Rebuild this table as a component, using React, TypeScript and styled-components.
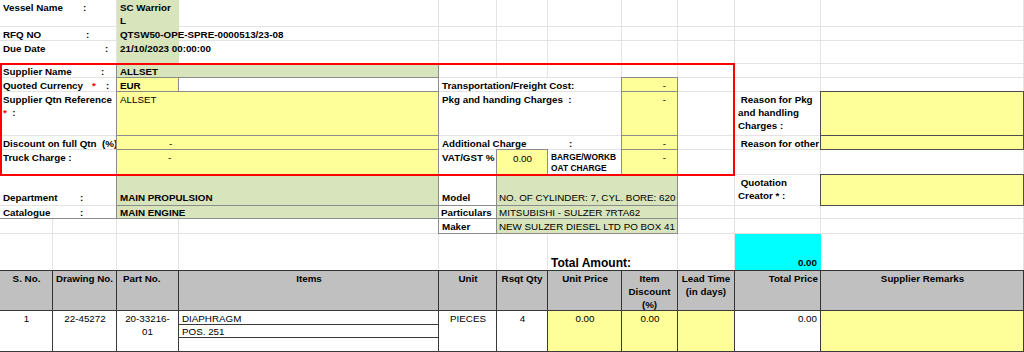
import React from "react";
import styled, { createGlobalStyle, css } from "styled-components";

const Global = createGlobalStyle`
  html, body { margin: 0; padding: 0; background: #ffffff; overflow: hidden; }
  body { font-family: "Liberation Sans", Arial, sans-serif; }
`;

const COLS = [53, 64, 62, 260, 58, 51, 74, 56, 57, 86, 203];
const ROWS = [27, 14, 23, 14, 14, 44, 14, 25, 31, 13, 15, 37, 40, 14, 13, 14];
const GRID = "#e3e3e3";

type Tone = "none" | "white" | "green" | "yellow" | "cyan";
type Frame = "gray" | "dark" | "under";

const toneBg: Record<Tone, string> = {
  none: "transparent",
  white: "#ffffff",
  green: "#d8e4bc",
  yellow: "#ffff99",
  cyan: "#00ffff",
};

const frameColor: Record<Frame, string> = {
  gray: "#8c8c8c",
  dark: "#4d4d4d",
  under: "#8c8c8c",
};

interface CellProps {
  $r: number;
  $c: number;
  $rs?: number;
  $cs?: number;
  $v?: "top" | "bottom";
  $align?: "left" | "center" | "right";
  $pl?: number;
  $pr?: number;
  $pt?: number;
  $wrap?: boolean;
  $clip?: boolean;
  $spill?: boolean;
  $tone?: Tone;
  $frame?: Frame;
  $bold?: boolean;
}

const Sheet = styled.div`
  display: grid;
  grid-template-columns: ${COLS.map((w) => `${w}px`).join(" ")};
  grid-template-rows: ${ROWS.map((h) => `${h}px`).join(" ")};
  width: 1024px;
  height: 352px;
  overflow: hidden;
  font-family: "Liberation Sans", Arial, sans-serif;
  font-size: 9.8px;
  line-height: 13px;
  color: #000000;
`;

const Cell = styled.div<CellProps>`
  grid-row: ${(p) => p.$r} / span ${(p) => p.$rs ?? 1};
  grid-column: ${(p) => p.$c} / span ${(p) => p.$cs ?? 1};
  box-sizing: border-box;
  min-width: 0;
  min-height: 0;
  display: flex;
  flex-direction: column;
  justify-content: ${(p) => (p.$v === "bottom" ? "flex-end" : "flex-start")};
  text-align: ${(p) => p.$align ?? "left"};
  white-space: ${(p) => (p.$wrap ? "pre-wrap" : "pre")};
  overflow: ${(p) => (p.$clip ? "hidden" : "visible")};
  padding: ${(p) => p.$pt ?? 1}px ${(p) => p.$pr ?? 2}px
    ${(p) => (p.$v === "bottom" ? 1 : 0)}px ${(p) => p.$pl ?? 3}px;
  background: ${(p) => toneBg[p.$tone ?? "none"]};
  border-right: 1px solid
    ${(p) => (p.$tone && p.$tone !== "none" ? "transparent" : GRID)};
  border-bottom: 1px solid
    ${(p) => (p.$tone && p.$tone !== "none" ? "transparent" : GRID)};
  ${(p) =>
    p.$frame &&
    p.$frame !== "under" &&
    css`
      border: 1px solid ${frameColor[p.$frame]};
      margin: -1px 0 0 -1px;
      position: relative;
      z-index: 1;
    `}
  ${(p) =>
    p.$frame === "under" &&
    css`
      border-bottom-color: ${frameColor.under};
    `}
  ${(p) =>
    p.$spill &&
    css`
      position: relative;
      z-index: 2;
    `}
`;

const Blank = styled(Cell)``;

const Label = styled(Cell)`
  font-weight: 700;
`;

const Value = styled(Cell)`
  font-weight: ${(p) => (p.$bold ? 700 : 400)};
`;

const TotalLabel = styled(Label)`
  font-size: 12px;
  line-height: 14px;
  padding-bottom: 0;
`;

const TinyLabel = styled(Label)`
  font-size: 8.4px;
  line-height: 11px;
  white-space: normal;
  word-break: break-all;
`;

const HeadCell = styled(Cell)`
  background: #c0c0c0;
  font-weight: 700;
  text-align: ${(p) => p.$align ?? "center"};
  white-space: normal;
  border: 1px solid #333333;
  margin: -1px 0 0 -1px;
  position: relative;
  z-index: 1;
`;

const BodyCell = styled(Cell)`
  font-weight: 400;
  text-align: ${(p) => p.$align ?? "center"};
  white-space: normal;
  border: 1px solid #3a3a3a;
  margin: -1px 0 0 -1px;
  position: relative;
  z-index: 1;
`;

const Content = styled.div`
  min-width: 0;
`;

const Key = styled.span<{ $w: number }>`
  display: inline-block;
  width: ${(p) => p.$w}px;
`;

const Req = styled.span`
  color: #ff0000;
`;

const RedFrame = styled.div`
  grid-row: 4 / 9;
  grid-column: 1 / 10;
  box-sizing: border-box;
  border: 2px solid #ff0000;
  margin: -1px 0 -1px 0;
  pointer-events: none;
  position: relative;
  z-index: 5;
`;

type Kind = "label" | "value" | "total" | "tiny" | "head" | "body";

interface Spec {
  r: number;
  c: number;
  rs?: number;
  cs?: number;
  kind: Kind;
  tone?: Tone;
  frame?: Frame;
  v?: "top" | "bottom";
  align?: "left" | "center" | "right";
  pl?: number;
  pr?: number;
  pt?: number;
  wrap?: boolean;
  clip?: boolean;
  spill?: boolean;
  bold?: boolean;
  text?: React.ReactNode;
}

const specs: Spec[] = [
  // vessel block
  { r: 1, c: 1, cs: 2, kind: "label", text: <><Key $w={80}>Vessel Name</Key>:</> },
  { r: 1, c: 3, kind: "value", tone: "green", bold: true, wrap: true, text: "SC Warrior L" },
  { r: 2, c: 1, cs: 2, kind: "label", text: <><Key $w={83}>RFQ NO</Key>:</> },
  { r: 2, c: 3, kind: "value", tone: "green", bold: true, spill: true, text: "QTSW50-OPE-SPRE-0000513/23-08" },
  { r: 3, c: 1, cs: 2, kind: "label", text: <><Key $w={102}>Due Date</Key>:</> },
  { r: 3, c: 3, kind: "value", tone: "green", bold: true, spill: true, text: "21/10/2023 00:00:00" },

  // supplier block
  { r: 4, c: 1, cs: 2, kind: "label", text: <><Key $w={98}>Supplier Name</Key>:</> },
  { r: 4, c: 3, cs: 2, kind: "value", tone: "green", frame: "gray", bold: true, text: "ALLSET" },
  {
    r: 5, c: 1, cs: 2, kind: "label",
    text: <><Key $w={89}>Quoted Currency</Key><Key $w={14}><Req>*</Req></Key>:</>,
  },
  { r: 5, c: 3, kind: "value", tone: "yellow", frame: "gray", bold: true, text: "EUR" },
  { r: 5, c: 4, kind: "value", tone: "white", frame: "gray" },
  { r: 5, c: 5, cs: 3, kind: "label", text: "Transportation/Freight Cost:" },
  { r: 5, c: 8, kind: "value", tone: "yellow", frame: "gray", align: "right", pr: 11, text: "-" },

  {
    r: 6, c: 1, cs: 2, kind: "label", wrap: true, pr: 0,
    text: <>{"Supplier Qtn Reference "}<Req>*</Req>{"  :"}</>,
  },
  { r: 6, c: 3, cs: 2, kind: "value", tone: "yellow", frame: "gray", text: "ALLSET" },
  { r: 6, c: 5, cs: 3, kind: "label", text: "Pkg and handing Charges  :" },
  { r: 6, c: 8, kind: "value", tone: "yellow", frame: "gray", align: "right", pr: 11, text: "-" },
  { r: 6, c: 10, kind: "label", wrap: true, pr: 1, text: " Reason for Pkg and handling Charges :" },
  { r: 6, c: 11, kind: "value", tone: "yellow", frame: "dark" },

  { r: 7, c: 1, cs: 2, kind: "label", pr: 0, text: "Discount on full Qtn  (%)" },
  { r: 7, c: 3, cs: 2, kind: "value", tone: "yellow", frame: "gray", pl: 52, text: "-" },
  { r: 7, c: 5, cs: 3, kind: "label", text: <><Key $w={127}>Additional Charge</Key>:</> },
  { r: 7, c: 8, kind: "value", tone: "yellow", frame: "gray", align: "right", pr: 11, text: "-" },
  { r: 7, c: 10, kind: "label", text: " Reason for other" },
  { r: 7, c: 11, kind: "value", tone: "yellow", frame: "dark" },

  { r: 8, c: 1, cs: 2, kind: "label", text: "Truck Charge :" },
  { r: 8, c: 3, cs: 2, kind: "value", tone: "yellow", frame: "gray", pl: 51, text: "-" },
  { r: 8, c: 5, kind: "label", text: "VAT/GST %" },
  { r: 8, c: 6, kind: "value", tone: "yellow", frame: "gray", align: "center", pt: 2, text: "0.00" },
  { r: 8, c: 7, kind: "tiny", pt: 2, text: "BARGE/WORKBOAT CHARGE" },
  { r: 8, c: 8, kind: "value", tone: "yellow", frame: "gray", align: "right", pr: 11, text: "-" },

  // department / model block
  { r: 9, c: 1, cs: 2, kind: "label", v: "bottom", text: <><Key $w={77}>Department</Key>:</> },
  { r: 9, c: 3, cs: 2, kind: "value", tone: "green", frame: "gray", bold: true, v: "bottom", text: "MAIN PROPULSION" },
  { r: 9, c: 5, kind: "label", tone: "white", frame: "gray", v: "bottom", text: "Model" },
  { r: 9, c: 6, cs: 3, kind: "value", tone: "green", frame: "gray", v: "bottom", clip: true, pl: 2, pr: 0, text: "NO. OF CYLINDER: 7, CYL. BORE: 620" },
  { r: 9, c: 10, kind: "label", wrap: true, pr: 1, text: " Quotation Creator * :" },
  { r: 9, c: 11, kind: "value", tone: "yellow", frame: "dark" },

  { r: 10, c: 1, cs: 2, kind: "label", frame: "under", pt: 0, text: <><Key $w={77}>Catalogue</Key>:</> },
  { r: 10, c: 3, cs: 2, kind: "value", tone: "green", frame: "gray", bold: true, pt: 0, text: "MAIN ENGINE" },
  { r: 10, c: 5, kind: "label", tone: "white", frame: "gray", pt: 0, pl: 2, pr: 0, text: "Particulars" },
  { r: 10, c: 6, cs: 3, kind: "value", tone: "green", frame: "gray", clip: true, pt: 0, pl: 2, pr: 0, text: "MITSUBISHI - SULZER 7RTA62" },

  { r: 11, c: 5, kind: "label", tone: "white", frame: "gray", text: "Maker" },
  { r: 11, c: 6, cs: 3, kind: "value", tone: "green", frame: "gray", clip: true, pl: 2, pr: 0, text: "NEW SULZER DIESEL LTD PO BOX 41" },

  // totals
  { r: 12, c: 7, cs: 2, kind: "total", v: "bottom", text: "Total Amount:" },
  { r: 12, c: 10, kind: "value", tone: "cyan", bold: true, v: "bottom", align: "right", pr: 3, text: "0.00" },

  // table header
  { r: 13, c: 1, kind: "head", text: "S. No." },
  { r: 13, c: 2, kind: "head", pl: 2, pr: 2, text: "Drawing No." },
  { r: 13, c: 3, kind: "head", align: "left", pl: 6, text: "Part No." },
  { r: 13, c: 4, kind: "head", text: "Items" },
  { r: 13, c: 5, kind: "head", text: "Unit" },
  { r: 13, c: 6, kind: "head", pl: 2, pr: 2, text: "Rsqt Qty" },
  { r: 13, c: 7, kind: "head", text: "Unit Price" },
  { r: 13, c: 8, kind: "head", pl: 2, pr: 2, text: "Item Discount (%)" },
  { r: 13, c: 9, kind: "head", pl: 1, pr: 1, text: "Lead Time (in days)" },
  { r: 13, c: 10, kind: "head", align: "right", pr: 2, text: "Total Price" },
  { r: 13, c: 11, kind: "head", text: "Supplier Remarks" },

  // table body
  { r: 14, c: 1, rs: 3, kind: "body", text: "1" },
  { r: 14, c: 2, rs: 3, kind: "body", text: "22-45272" },
  { r: 14, c: 3, rs: 3, kind: "body", pl: 5, pr: 5, text: "20-33216-01" },
  { r: 14, c: 4, kind: "body", align: "left", text: "DIAPHRAGM" },
  { r: 15, c: 4, kind: "body", align: "left", pt: 0, text: "POS. 251" },
  { r: 16, c: 4, kind: "body" },
  { r: 14, c: 5, rs: 3, kind: "body", text: "PIECES" },
  { r: 14, c: 6, rs: 3, kind: "body", text: "4" },
  { r: 14, c: 7, rs: 3, kind: "body", tone: "yellow", text: "0.00" },
  { r: 14, c: 8, rs: 3, kind: "body", tone: "yellow", text: "0.00" },
  { r: 14, c: 9, rs: 3, kind: "body", tone: "yellow" },
  { r: 14, c: 10, rs: 3, kind: "body", tone: "white", align: "right", pr: 3, text: "0.00" },
  { r: 14, c: 11, rs: 3, kind: "body", tone: "yellow" },
];

const kindComponent = {
  label: Label,
  value: Value,
  total: TotalLabel,
  tiny: TinyLabel,
  head: HeadCell,
  body: BodyCell,
} as const;

function renderSpec(s: Spec, i: number) {
  const Comp = kindComponent[s.kind];
  return (
    <Comp
      key={`s${i}`}
      $r={s.r}
      $c={s.c}
      $rs={s.rs}
      $cs={s.cs}
      $v={s.v}
      $align={s.align}
      $pl={s.pl}
      $pr={s.pr}
      $pt={s.pt}
      $wrap={s.wrap}
      $clip={s.clip}
      $spill={s.spill}
      $tone={s.tone}
      $frame={s.frame}
      $bold={s.bold}
    >
      {s.text !== undefined && <Content>{s.text}</Content>}
    </Comp>
  );
}

function blankCells() {
  const taken = new Set<string>();
  specs.forEach((s) => {
    for (let r = s.r; r < s.r + (s.rs ?? 1); r++)
      for (let c = s.c; c < s.c + (s.cs ?? 1); c++) taken.add(`${r}-${c}`);
  });
  const out: React.ReactNode[] = [];
  for (let r = 1; r <= ROWS.length; r++)
    for (let c = 1; c <= COLS.length; c++)
      if (!taken.has(`${r}-${c}`)) out.push(<Blank key={`b${r}-${c}`} $r={r} $c={c} />);
  return out;
}

export default function App() {
  return (
    <>
      <Global />
      <Sheet>
        {blankCells()}
        {specs.map(renderSpec)}
        <RedFrame />
      </Sheet>
    </>
  );
}
